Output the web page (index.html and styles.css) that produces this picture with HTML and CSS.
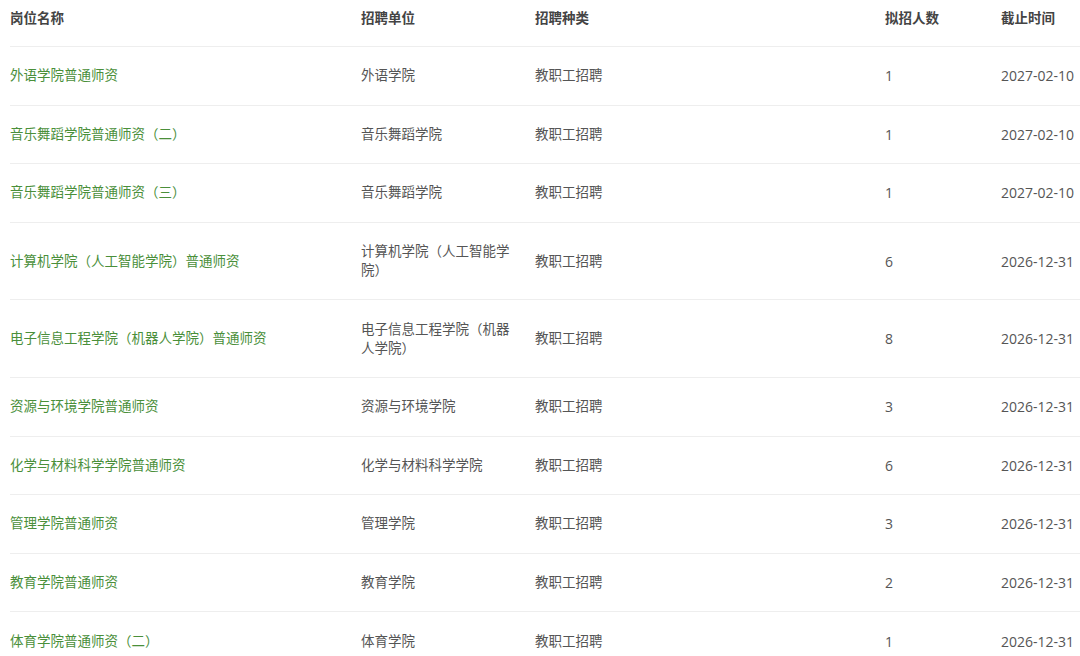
FILE: index.html
```html
<!DOCTYPE html>
<html lang="zh-CN">
<head>
<meta charset="utf-8">
<title>招聘岗位</title>
<link rel="stylesheet" href="styles.css">
</head>
<body>
<table class="jobs">
  <colgroup>
    <col class="c-name"><col class="c-unit"><col class="c-type"><col class="c-num"><col class="c-date">
  </colgroup>
  <thead>
    <tr><th>岗位名称</th><th>招聘单位</th><th>招聘种类</th><th>拟招人数</th><th>截止时间</th></tr>
  </thead>
  <tbody>
    <tr><td class="link">外语学院普通师资</td><td>外语学院</td><td>教职工招聘</td><td class="num">1</td><td class="num">2027-02-10</td></tr>
    <tr><td class="link">音乐舞蹈学院普通师资（二）</td><td>音乐舞蹈学院</td><td>教职工招聘</td><td class="num">1</td><td class="num">2027-02-10</td></tr>
    <tr><td class="link">音乐舞蹈学院普通师资（三）</td><td>音乐舞蹈学院</td><td>教职工招聘</td><td class="num">1</td><td class="num">2027-02-10</td></tr>
    <tr><td class="link">计算机学院（人工智能学院）普通师资</td><td>计算机学院（人工智能学院）</td><td>教职工招聘</td><td class="num">6</td><td class="num">2026-12-31</td></tr>
    <tr><td class="link">电子信息工程学院（机器人学院）普通师资</td><td>电子信息工程学院（机器人学院）</td><td>教职工招聘</td><td class="num">8</td><td class="num">2026-12-31</td></tr>
    <tr><td class="link">资源与环境学院普通师资</td><td>资源与环境学院</td><td>教职工招聘</td><td class="num">3</td><td class="num">2026-12-31</td></tr>
    <tr><td class="link">化学与材料科学学院普通师资</td><td>化学与材料科学学院</td><td>教职工招聘</td><td class="num">6</td><td class="num">2026-12-31</td></tr>
    <tr><td class="link">管理学院普通师资</td><td>管理学院</td><td>教职工招聘</td><td class="num">3</td><td class="num">2026-12-31</td></tr>
    <tr><td class="link">教育学院普通师资</td><td>教育学院</td><td>教职工招聘</td><td class="num">2</td><td class="num">2026-12-31</td></tr>
    <tr><td class="link">体育学院普通师资（二）</td><td>体育学院</td><td>教职工招聘</td><td class="num">1</td><td class="num">2026-12-31</td></tr>
  </tbody>
</table>
</body>
</html>
```

FILE: styles.css
```css
html, body {
  margin: 0;
  padding: 0;
  background: #fff;
  overflow: hidden;
}
body {
  font-family: "Open Sans", "Noto Sans CJK SC", sans-serif;
  font-size: 13.5px;
  line-height: 19px;
  color: #555;
}
.jobs {
  margin-left: 10px;
  width: 1090px;
  border-collapse: collapse;
  table-layout: fixed;
}
.c-name { width: 351px; }
.c-unit { width: 174px; }
.c-type { width: 350px; }
.c-num { width: 116px; }
.c-date { width: 99px; }
.jobs th {
  text-align: left;
  font-weight: 700;
  color: #444;
  padding: 8.5px 16px 18.5px 0;
  border-bottom: 1px solid #eeeeee;
}
.jobs td {
  padding: 19.3px 16px 19.3px 0;
  border-bottom: 1px solid #eeeeee;
  vertical-align: middle;
}
.jobs td.num {
  font-size: 14px;
}
.jobs td.link {
  color: #4a8f3a;
}
```
